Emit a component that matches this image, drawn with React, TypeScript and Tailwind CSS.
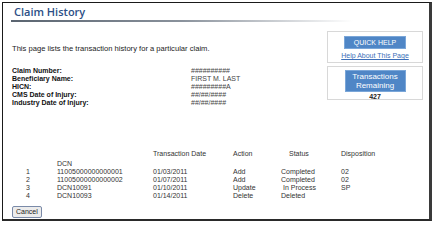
const claimFields = [
  { label: 'Claim Number:', value: '##########' },
  { label: 'Beneficiary Name:', value: 'FIRST M. LAST' },
  { label: 'HICN:', value: '#########A' },
  { label: 'CMS Date of Injury:', value: '##/##/####' },
  { label: 'Industry Date of Injury:', value: '##/##/####' },
];

const transactions = [
  { n: '1', dcn: '11005000000000001', date: '01/03/2011', action: 'Add', status: 'Completed', disp: '02' },
  { n: '2', dcn: '11005000000000002', date: '01/07/2011', action: 'Add', status: 'Completed', disp: '02' },
  { n: '3', dcn: 'DCN10091', date: '01/10/2011', action: 'Update', status: ' In Process', disp: 'SP' },
  { n: '4', dcn: 'DCN10093', date: '01/14/2011', action: 'Delete', status: 'Deleted', disp: '' },
];

export default function App() {
  return (
    <div className="w-[434px] h-[223px] bg-white p-[2px] font-['Liberation_Sans',Arial,sans-serif]">
      <div className="h-[219px] border-t border-l border-[#1a1a1a] border-r-[3px] border-b-[2px] border-r-[#3a3a3a] border-b-[#2a2a2a] flex flex-col">
        {/* title */}
        <div className="pl-[8px] pt-[2px]">
          <div className="text-[11px] leading-[13px] font-semibold text-[#2c4f86] font-['Open_Sans',sans-serif] pl-[3px]">
            Claim History
          </div>
          <div className="mt-[2px] h-[2px] w-[342px] bg-gradient-to-r from-[#5a6470] via-[#8a929c] to-transparent" />
        </div>

        <div className="flex pl-[9px] pr-[6px]">
          <div className="flex-1 pt-[22px]">
            <p className="text-[7.6px] leading-[9px] text-[#222]">
              This page lists the transaction history for a particular claim.
            </p>
            <div className="mt-[14px] flex flex-col">
              {claimFields.map((f) => (
                <div key={f.label} className="flex text-[7px] leading-[8px]">
                  <span className="w-[179px] font-bold text-[#111]">{f.label}</span>
                  <span className="text-[#444]">{f.value}</span>
                </div>
              ))}
            </div>
          </div>

          <div className="w-[96px] pt-[9px] flex flex-col gap-[3px]">
            <div className="h-[32px] border border-[#d8d8d8] flex flex-col items-center pt-[4px]">
              <div className="bg-[#4f86c6] border border-[#7aa6d8] text-white text-[7px] leading-[9px] py-[1px] w-[62px] text-center">
                QUICK HELP
              </div>
              <div className="mt-[2px] text-[#3d6fb8] underline text-[7px] leading-[9px]">
                Help About This Page
              </div>
            </div>
            <div className="h-[34px] border border-[#d8d8d8] flex flex-col items-center pt-[3px]">
              <div className="bg-[#4f86c6] border border-[#7aa6d8] text-white text-[8px] leading-[9px] w-[61px] text-center py-[1px]">
                Transactions
                <br />
                Remaining
              </div>
              <div className="mt-[1px] text-[7px] leading-[8px] font-bold text-[#222]">427</div>
            </div>
          </div>
        </div>

        {/* table */}
        <div className="mt-auto pl-[7px] text-[7px] leading-[8px] text-[#333]">
          <div className="grid grid-cols-[47px_96px_80px_48px_60px_1fr]">
            <span />
            <span />
            <span>Transaction Date</span>
            <span>Action</span>
            <span className="pl-[8px]">Status</span>
            <span>Disposition</span>
          </div>
          <div className="grid grid-cols-[47px_96px_80px_48px_60px_1fr] mt-[2px]">
            <span />
            <span>DCN</span>
          </div>
          {transactions.map((t) => (
            <div key={t.n} className="grid grid-cols-[47px_96px_80px_48px_60px_1fr]">
              <span className="pl-[16px]">{t.n}</span>
              <span>{t.dcn}</span>
              <span>{t.date}</span>
              <span>{t.action}</span>
              <span className="whitespace-pre">{t.status}</span>
              <span>{t.disp}</span>
            </div>
          ))}
          <div className="mt-[6px] mb-[1px] pl-[2px]">
            <button className="bg-[#ececec] border border-[#7a8aa8] rounded-[2px] text-[7px] leading-[10px] px-[3px] text-[#222]">
              Cancel
            </button>
          </div>
        </div>
      </div>
    </div>
  );
}
